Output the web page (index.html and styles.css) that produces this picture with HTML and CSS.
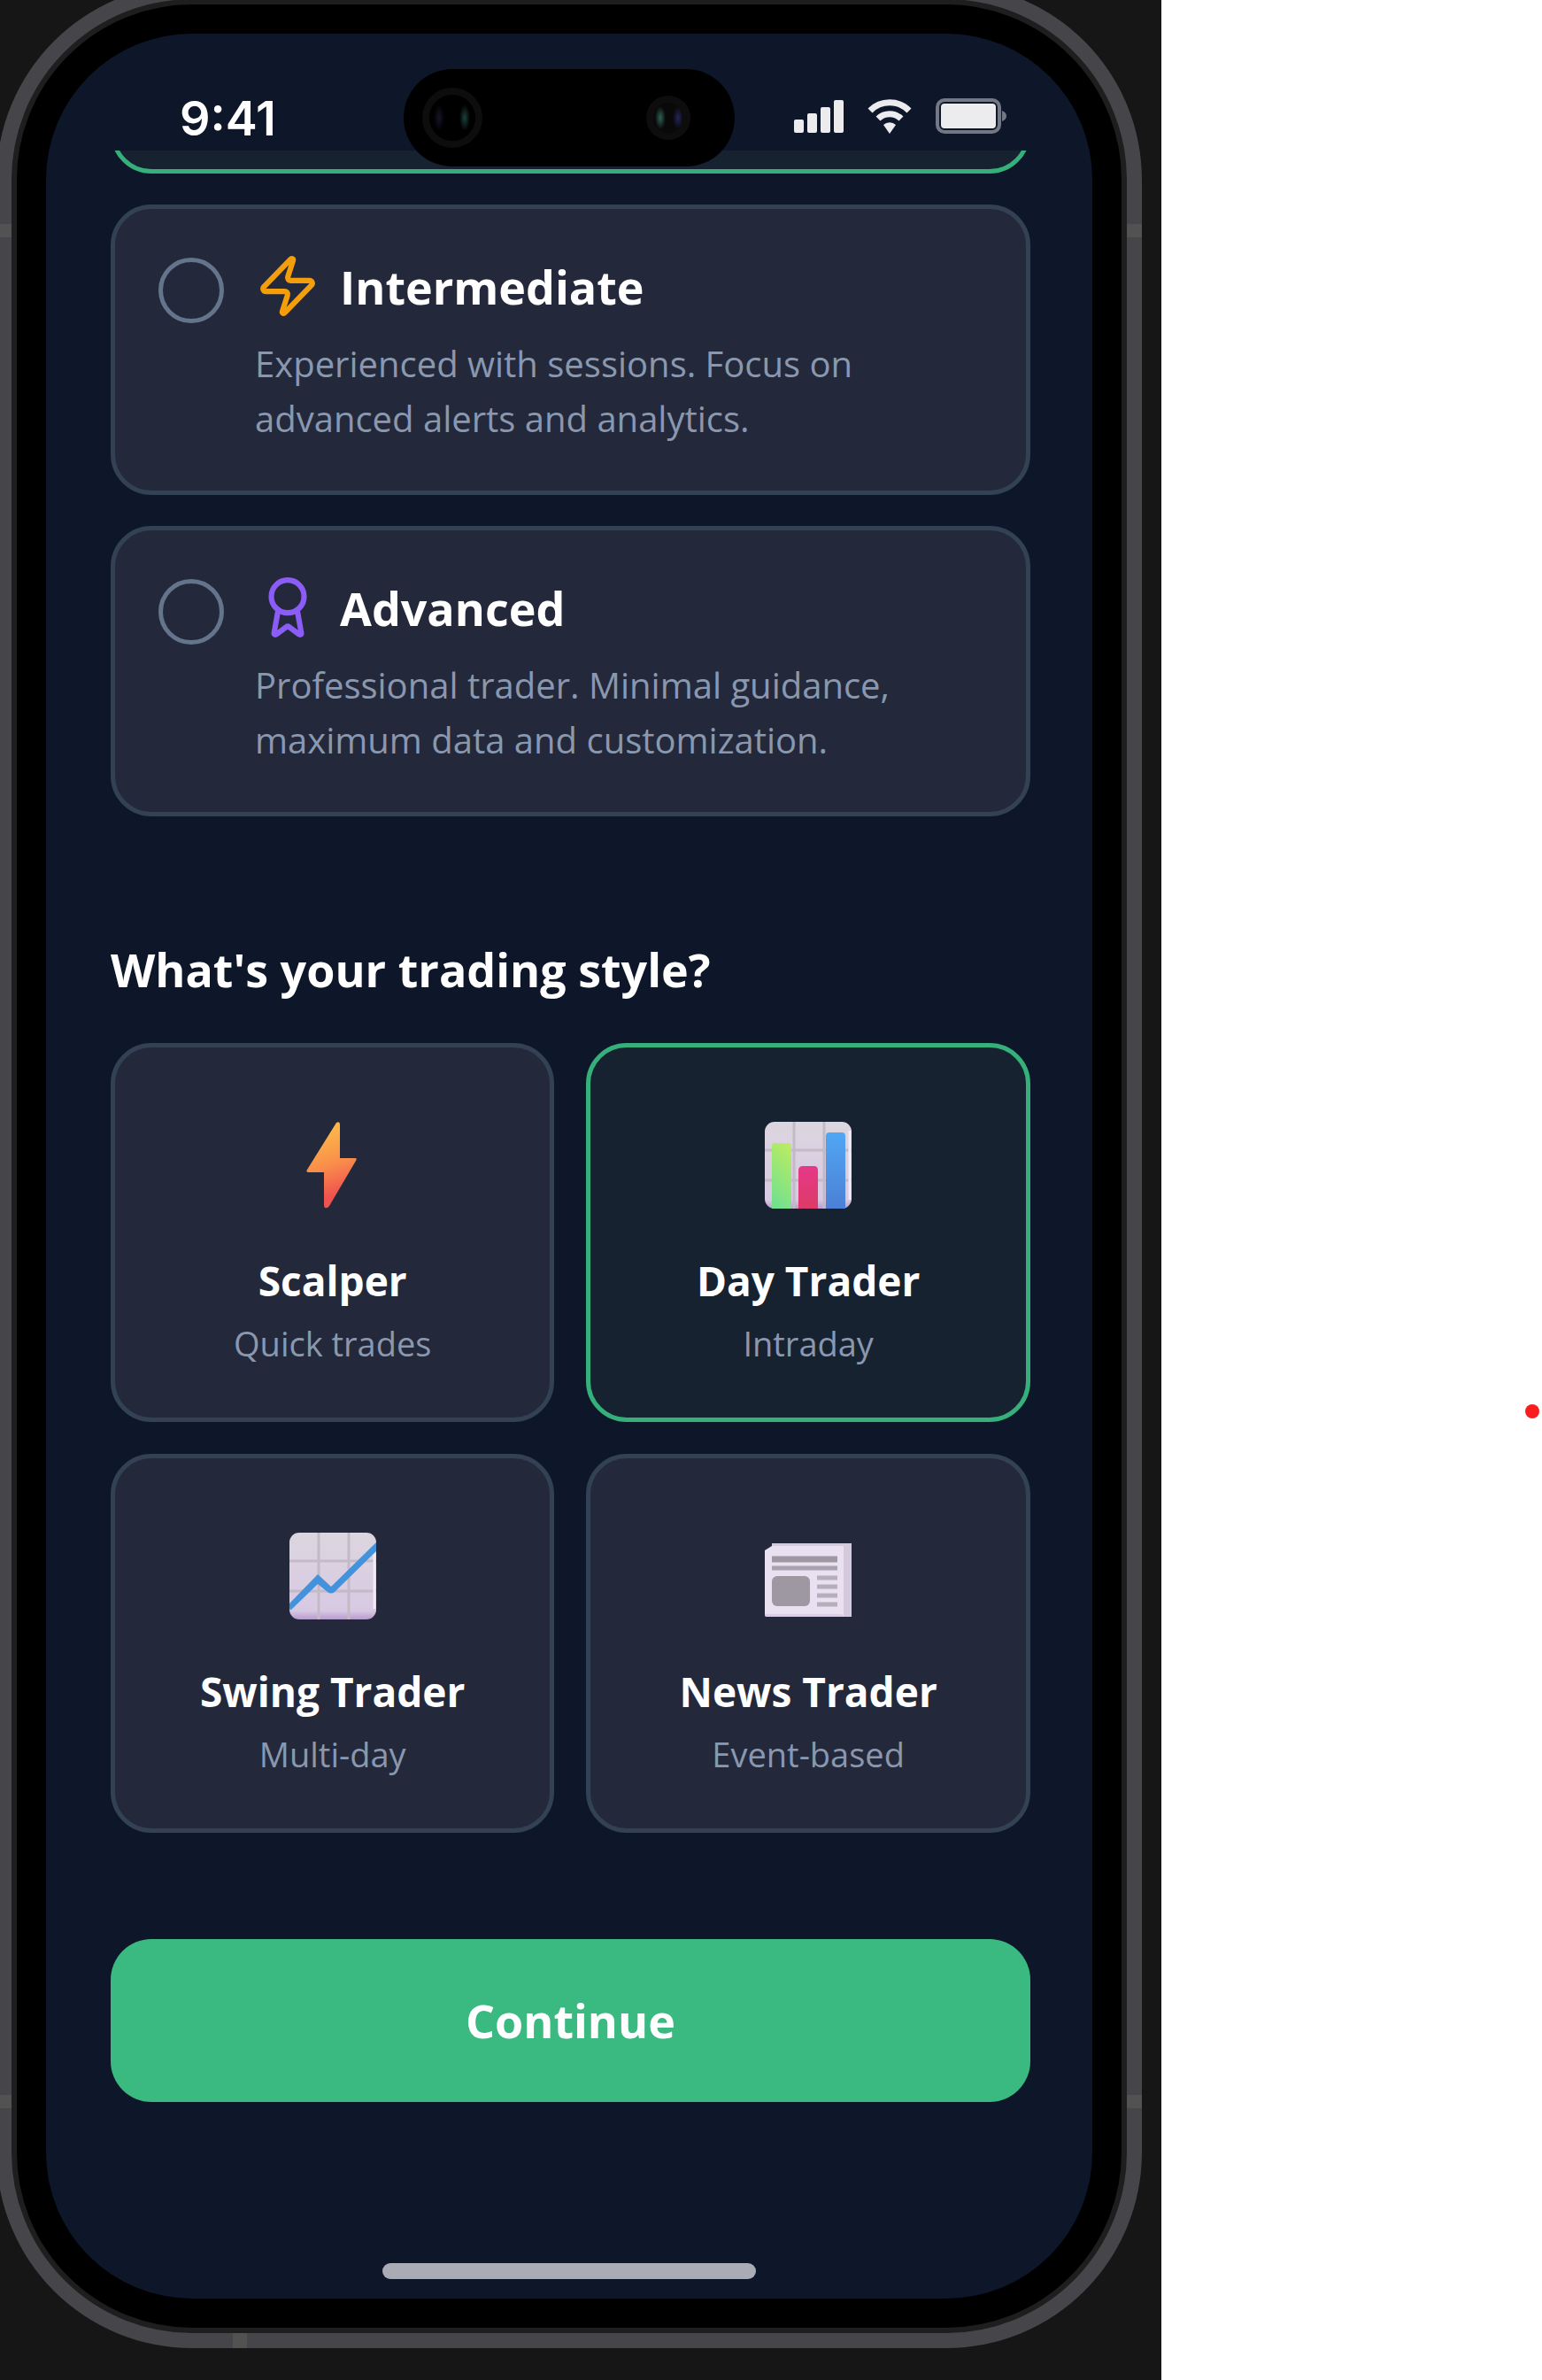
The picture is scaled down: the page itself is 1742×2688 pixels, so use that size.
FILE: index.html
```html
<!-- Trader profile setup -->
<!DOCTYPE html>
<html lang="en">
<head>
  <meta charset="UTF-8">
  <meta name="viewport" content="width=device-width, initial-scale=1.0">
  <title>Trader Profile</title>
  <link rel="stylesheet" href="styles.css">
</head>
<body>
  <div class="page">
    <main class="backdrop">
      <div class="phone">
        <span class="antenna antenna-left-top"></span>
        <span class="antenna antenna-left-bottom"></span>
        <span class="antenna antenna-right-top"></span>
        <span class="antenna antenna-right-bottom"></span>
        <span class="antenna antenna-bottom"></span>

        <div class="bezel">
          <div class="screen">
            <!-- Status bar -->
            <header class="status-bar">
              <span class="time">9:41</span>
              <div class="island">
                <span class="camera"></span>
                <span class="camera camera-small"></span>
              </div>
              <div class="status-icons">
                <svg class="signal" viewBox="0 0 56 38" aria-hidden="true">
                  <rect x="0" y="23" width="11" height="15" rx="2"/>
                  <rect x="15" y="16" width="11" height="22" rx="2"/>
                  <rect x="30" y="9" width="11" height="29" rx="2"/>
                  <rect x="45" y="1" width="11" height="37" rx="2"/>
                </svg>
                <svg class="wifi" viewBox="0 0 50 40" aria-hidden="true">
                  <path class="wifi-arc" d="M3 14a31 31 0 0 1 44 0"/>
                  <path class="wifi-arc" d="M12 23a18.500 18.500 0 0 1 26 0"/>
                  <path d="M25 40l-7-10a10 10 0 0 1 14 0z"/>
                </svg>
                <svg class="battery" viewBox="0 0 80 40" aria-hidden="true">
                  <rect class="battery-shell" x="2" y="2" width="70" height="36" rx="8"/>
                  <rect x="6" y="6" width="62" height="28" rx="4"/>
                  <path class="battery-cap" d="M75 14q5 2 5 6t-5 6z"/>
                </svg>
              </div>
            </header>

            <form class="content">
              <!-- Experience level -->
              <div class="peek"><div class="peek-card"></div></div>

              <label class="level-card">
                <input type="radio" name="level" value="intermediate">
                <span class="level-body">
                  <span class="level-head">
                    <svg class="level-icon zap" viewBox="0 0 24 24" aria-hidden="true">
                      <path d="M4 14a1 1 0 0 1-.78-1.63l9.9-10.2a.5.5 0 0 1 .86.46l-1.92 6.02A1 1 0 0 0 13 10h7a1 1 0 0 1 .78 1.63l-9.9 10.2a.5.5 0 0 1-.86-.46l1.92-6.02A1 1 0 0 0 11 14z"/>
                    </svg>
                    <span class="level-title">Intermediate</span>
                  </span>
                  <span class="level-text">Experienced with sessions. Focus on<br>advanced alerts and analytics.</span>
                </span>
              </label>

              <label class="level-card">
                <input type="radio" name="level" value="advanced">
                <span class="level-body">
                  <span class="level-head">
                    <svg class="level-icon award" viewBox="0 0 24 24" aria-hidden="true">
                      <path d="m15.477 12.89 1.515 8.526a.5.5 0 0 1-.81.47l-3.58-2.687a1 1 0 0 0-1.197 0l-3.586 2.686a.5.5 0 0 1-.81-.469l1.514-8.526"/>
                      <circle cx="12" cy="8" r="6"/>
                    </svg>
                    <span class="level-title">Advanced</span>
                  </span>
                  <span class="level-text">Professional trader. Minimal guidance,<br>maximum data and customization.</span>
                </span>
              </label>

              <!-- Trading style -->
              <h2>What's your trading style?</h2>
              <div class="style-grid">
                <label class="style-card">
                  <input type="radio" name="style" value="scalper">
                  <svg class="style-icon" viewBox="0 0 98 98" aria-hidden="true">
                    <defs>
                      <linearGradient id="boltFill" x1="0.4" y1="0" x2="0.6" y2="1">
                        <stop offset="0.1" stop-color="#fdb649"/>
                        <stop offset="0.5" stop-color="#f98c4b"/>
                        <stop offset="0.85" stop-color="#f0534f"/>
                      </linearGradient>
                    </defs>
                    <path fill="url(#boltFill)" d="M53 1q4-2 4 2v38h17q3 0 1 3L45 95q-2 3-5 2-1-1-1-3V57H22q-4 0-2-3z"/>
                  </svg>
                  <span class="style-title">Scalper</span>
                  <span class="style-text">Quick trades</span>
                </label>

                <label class="style-card">
                  <input type="radio" name="style" value="day" checked>
                  <svg class="style-icon" viewBox="0 0 98 98" aria-hidden="true">
                    <defs>
                      <linearGradient id="paper" x1="0" y1="0" x2="0" y2="1">
                        <stop offset="0" stop-color="#dcd6df"/>
                        <stop offset="0.9" stop-color="#d8c9e3"/>
                        <stop offset="1" stop-color="#b99bd0"/>
                      </linearGradient>
                      <linearGradient id="greenBar" x1="0.7" y1="0" x2="0.4" y2="1">
                        <stop offset="0" stop-color="#b9ec62"/>
                        <stop offset="1" stop-color="#73e08f"/>
                      </linearGradient>
                      <linearGradient id="pinkBar" x1="0" y1="0" x2="0" y2="1">
                        <stop offset="0" stop-color="#e63888"/>
                        <stop offset="1" stop-color="#dc3b67"/>
                      </linearGradient>
                      <linearGradient id="blueBar" x1="0" y1="0" x2="0" y2="1">
                        <stop offset="0" stop-color="#51a7f4"/>
                        <stop offset="1" stop-color="#4b80d6"/>
                      </linearGradient>
                    </defs>
                    <rect width="98" height="98" rx="11" fill="url(#paper)"/>
                    <path class="grid-line" d="M33 0v98M67 0v98M0 32h98M0 66h98"/>
                    <path class="paper-shine" d="M96 10v78"/>
                    <path fill="url(#greenBar)" d="M8 98V27q0-3 3-3h16q3 0 3 3v71z"/>
                    <path fill="url(#pinkBar)" d="M38 98V55q0-5 5-5h13q4 0 4 5v43z"/>
                    <path fill="url(#blueBar)" d="M69 98V16q0-4 4-4h14q4 0 4 4v82z"/>
                  </svg>
                  <span class="style-title">Day Trader</span>
                  <span class="style-text">Intraday</span>
                </label>

                <label class="style-card">
                  <input type="radio" name="style" value="swing">
                  <svg class="style-icon" viewBox="0 0 98 98" aria-hidden="true">
                    <rect width="98" height="98" rx="11" fill="url(#paper)"/>
                    <path class="grid-line" d="M33 0v98M67 0v98M0 32h98M0 66h98"/>
                    <path class="paper-shine" d="M96 20v66"/>
                    <path fill="#4392dc" d="M0 80l32-33 15 14L98 11v10L51 67q-4 3-8 0L32 58 2 87q-2 1-2-3z"/>
                  </svg>
                  <span class="style-title">Swing Trader</span>
                  <span class="style-text">Multi-day</span>
                </label>

                <label class="style-card">
                  <input type="radio" name="style" value="news">
                  <svg class="style-icon" viewBox="0 0 98 98" aria-hidden="true">
                    <path fill="#d5cadd" d="M8 12h90v83H8z"/>
                    <path fill="#e9e1f1" d="M0 20l8-5h81v80H2q-2 0-2-3z"/>
                    <path fill="#dccbea" d="M0 92h87l2 3H2q-2 0-2-3z"/>
                    <path class="news-heavy" d="M8 30h74"/>
                    <path class="news-line" d="M8 40h74"/>
                    <rect x="8" y="49" width="43" height="34" rx="6" fill="#9e98a3"/>
                    <path class="news-faint" d="M59 51h23M59 61h23M59 71h23M59 81h23"/>
                  </svg>
                  <span class="style-title">News Trader</span>
                  <span class="style-text">Event-based</span>
                </label>
              </div>

              <button type="submit" class="btn">Continue</button>
            </form>

            <div class="home-indicator"></div>
          </div>
        </div>
      </div>
    </main>

    <aside class="side">
      <span class="dot"></span>
    </aside>
  </div>
</body>
</html>
```
FILE: styles.css
```css
* {
  box-sizing: border-box;
}

body {
  margin: 0;
  background: #fff;
  color: #fff;
  font-family: "Segoe UI", "Open Sans", "Noto Sans", sans-serif;
}

.page {
  display: grid;
  grid-template-columns: 61fr 20fr;
  min-height: 100vh;
  overflow: hidden;
}

.backdrop {
  background: #161616;
  padding-bottom: 33px;
}

/* Phone frame */
.phone {
  position: relative;
  margin: -18px 22px 0 -4px;
  padding: 17px;
  border-radius: 221px;
  background: #464549;
}

.bezel {
  padding: 33px;
  border: 6px solid #1e1e1e;
  border-radius: 204px;
  background: #000;
}

.antenna {
  position: absolute;
  width: 17px;
  height: 15px;
  background: #525252;
}

.antenna-left-top {
  top: 271px;
  left: 0;
}

.antenna-left-bottom {
  bottom: 271px;
  left: 0;
}

.antenna-right-top {
  top: 271px;
  right: 0;
}

.antenna-right-bottom {
  bottom: 271px;
  right: 0;
}

.antenna-bottom {
  bottom: 0;
  left: 267px;
  width: 16px;
  height: 17px;
}

.screen {
  position: relative;
  display: flex;
  flex-direction: column;
  overflow: hidden;
  border-radius: 165px;
  background: #0e172a;
}

/* Status bar */
.status-bar {
  display: flex;
  align-items: center;
  justify-content: space-between;
  height: 132px;
  padding: 54px 97px 0 151px;
}

.time {
  padding-top: 6px;
  font-family: Inter, "Liberation Sans", sans-serif;
  font-size: 54px;
  font-weight: 600;
  line-height: 72px;
}

.island {
  position: absolute;
  z-index: 1;
  top: 40px;
  left: 50%;
  display: flex;
  align-items: center;
  justify-content: space-between;
  width: 374px;
  height: 110px;
  margin-left: -187px;
  padding: 0 50px 0 21px;
  border-radius: 55px;
  background: #000;
}

.camera {
  width: 68px;
  height: 68px;
  border: 8px solid #0d0d0d;
  border-radius: 50%;
  background:
    radial-gradient(ellipse 6px 15px at 11px 50%, #15152b, transparent),
    radial-gradient(ellipse 6px 15px at 40px 50%, #1c4038, transparent);
}

.camera-small {
  width: 50px;
  height: 50px;
  background:
    radial-gradient(ellipse 6px 13px at 8px 50%, #2f6156, transparent),
    radial-gradient(ellipse 6px 13px at 28px 50%, #23265a, transparent),
    #090909;
}

.status-icons {
  display: flex;
  align-items: center;
  gap: 27px;
  fill: #ececee;
}

.signal {
  width: 56px;
  height: 38px;
}

.wifi {
  width: 50px;
  height: 40px;
}

.wifi-arc {
  fill: none;
  stroke: #ececee;
  stroke-width: 7;
}

.battery {
  width: 80px;
  height: 40px;
}

.battery-shell {
  fill: none;
  stroke: #747884;
  stroke-width: 4;
}

.battery-cap {
  fill: #747884;
}

/* Content */
.content {
  display: flex;
  flex-direction: column;
  padding: 0 70px 0 73px;
}

.peek {
  display: flex;
  align-items: flex-end;
  height: 26px;
  overflow: hidden;
}

.peek-card {
  flex: 1 0 0;
  height: 120px;
  border: 5px solid #35b07b;
  border-radius: 46px;
  background: #172231;
}

.level-card {
  display: flex;
  gap: 35px;
  margin-top: 35px;
  padding: 50px 49px;
  border: 5px solid #334155;
  border-radius: 46px;
  background: #23293b;
  cursor: pointer;
}

.level-card input {
  appearance: none;
  flex: none;
  width: 74px;
  height: 74px;
  margin: 5px 0 0;
  border: 5px solid #64748b;
  border-radius: 50%;
}

.level-card input:checked {
  border-color: #3ab981;
}

.level-body,
.level-text {
  display: block;
}

.level-head {
  display: flex;
  gap: 22px;
}

.level-icon {
  width: 74px;
  height: 74px;
  fill: none;
  stroke-width: 2;
  stroke-linecap: round;
  stroke-linejoin: round;
}

.zap {
  stroke: #f59e0b;
}

.award {
  stroke: #8b5cf6;
}

.level-title {
  font-size: 52px;
  font-weight: 700;
  line-height: 76px;
}

.level-text {
  margin-top: 18px;
  color: #8a98af;
  font-size: 40px;
  line-height: 62px;
}

h2 {
  margin: 137px 0 47px;
  font-size: 52px;
  font-weight: 700;
  line-height: 72px;
}

.style-grid {
  display: grid;
  grid-template-columns: 1fr 1fr;
  gap: 36px;
}

.style-card {
  position: relative;
  display: flex;
  flex-direction: column;
  align-items: center;
  padding: 84px 24px 57px;
  border: 5px solid #334155;
  border-radius: 46px;
  background: #23293b;
  cursor: pointer;
}

.style-card input {
  position: absolute;
  opacity: 0;
}

.style-card:has(input:checked) {
  border-color: #35b07b;
  background: #172231;
}

.style-icon {
  width: 98px;
  height: 98px;
}

.grid-line {
  fill: none;
  stroke: #c3bac8;
  stroke-width: 3;
}

.paper-shine {
  stroke: #f1e9f4;
  stroke-width: 3;
}

.news-heavy {
  stroke: #9e98a3;
  stroke-width: 7;
}

.news-line {
  stroke: #a8a1ae;
  stroke-width: 5;
}

.news-faint {
  stroke: #b5aebb;
  stroke-width: 5;
}

.style-title {
  margin-top: 49px;
  font-size: 46px;
  font-weight: 700;
  line-height: 64px;
}

.style-text {
  margin-top: 12px;
  color: #8a98af;
  font-size: 38px;
  line-height: 54px;
}

.btn {
  margin-top: 120px;
  padding: 56px 48px;
  border: none;
  border-radius: 46px;
  background: #3ab981;
  color: #fff;
  font-family: inherit;
  font-size: 52px;
  font-weight: 700;
  line-height: 72px;
  cursor: pointer;
}

.home-indicator {
  width: 422px;
  height: 18px;
  margin: 182px auto 22px;
  border-radius: 9px;
  background: #a9acb5;
}

/* Side panel */
.side {
  display: flex;
  align-items: flex-start;
  justify-content: flex-end;
  padding: 1586px 3px 0 0;
}

.dot {
  width: 16px;
  height: 16px;
  border-radius: 50%;
  background: #f91e1e;
}
```
